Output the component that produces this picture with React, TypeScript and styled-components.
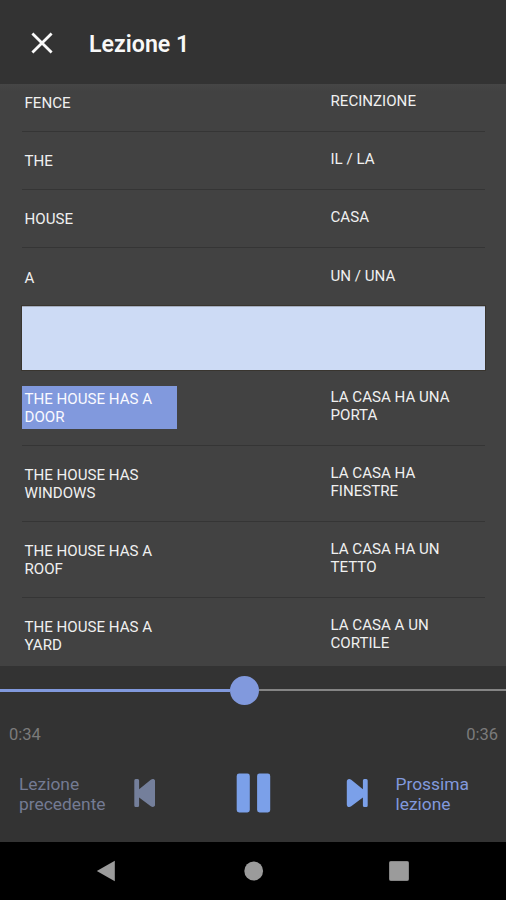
import React from "react";
import styled, { createGlobalStyle } from "styled-components";

const GlobalStyle = createGlobalStyle`
  * { box-sizing: border-box; }
  body { margin: 0; background: #000; }
`;

const Screen = styled.div`
  width: 506px;
  height: 900px;
  display: flex;
  flex-direction: column;
  overflow: hidden;
  background: #424242;
  font-family: Roboto, "Liberation Sans", sans-serif;
`;

const Header = styled.header`
  flex: 0 0 84px;
  display: flex;
  align-items: center;
  padding: 1px 0 0 31px;
  background: #333333;
`;

const CloseButton = styled.button`
  width: 22px;
  height: 22px;
  padding: 0;
  border: 0;
  background: none;
  svg { display: block; }
`;

const Title = styled.h1`
  margin: 0 0 0 36px;
  padding-top: 2px;
  font-size: 23.2px;
  line-height: 28px;
  font-weight: 600;
  color: #f8f8f8;
`;

const WordList = styled.main`
  flex: 0 0 582px;
  overflow: hidden;
  padding: 0 21px 0 22px;
  background: linear-gradient(#464646, #424242 8px);
`;

const Row = styled.div<{ $height: number; $top: number; $last?: boolean }>`
  height: ${(p) => p.$height}px;
  padding-top: ${(p) => p.$top}px;
  display: grid;
  grid-template-columns: 155px 130px;
  column-gap: 151px;
  align-items: start;
  border-bottom: ${(p) => (p.$last ? "0" : "1.5px solid #353535")};
`;

const Word = styled.div<{ $active?: boolean }>`
  margin-top: -3px;
  padding: 5px 2.5px 3px;
  font-size: 15.1px;
  line-height: 17.7px;
  color: ${(p) => (p.$active ? "#fafaff" : "#f0f0f0")};
  background: ${(p) => (p.$active ? "#8199dd" : "transparent")};
`;

const Translation = styled.div`
  padding-left: 2.5px;
  font-size: 15.1px;
  line-height: 17.7px;
  color: #f0f0f0;
`;

const Banner = styled.div`
  height: 64px;
  background: #cddbf5;
  border-top: 1px solid #a5aebf;
  outline: 1px solid #39352f;
`;

const Player = styled.section`
  flex: 0 0 176px;
  background: #333333;
`;

const Slider = styled.div`
  height: 48px;
  display: flex;
  align-items: center;
`;

const Played = styled.div`
  width: 230px;
  height: 3px;
  background: #8199dd;
`;

const Thumb = styled.div`
  width: 29px;
  height: 29px;
  border-radius: 50%;
  background: #8199dd;
`;

const Remaining = styled.div`
  flex: 1;
  height: 2px;
  background: #858585;
`;

const Times = styled.div`
  display: flex;
  justify-content: space-between;
  padding: 11px 8px 0 9px;
  font-size: 16.5px;
  line-height: 20px;
  color: #7b7b7b;
`;

const Controls = styled.div`
  height: 96px;
  display: grid;
  grid-template-columns: 114px 103px 35px 124.5px 92px;
  padding-left: 19px;
  align-items: center;
`;

const ControlLabel = styled.div<{ $dim?: boolean }>`
  padding-top: 2px;
  font-size: 17.4px;
  line-height: 20px;
  color: ${(p) => (p.$dim ? "#747b93" : "#8199dd")};
`;

const IconSlot = styled.div<{ $right?: boolean }>`
  display: flex;
  padding-left: ${(p) => (p.$right ? "75px" : "0")};
`;

const NavBar = styled.nav`
  flex: 0 0 58px;
  display: grid;
  grid-template-columns: 148px 145px 28px;
  padding-left: 96px;
  align-items: center;
  background: #000;
  svg { display: block; }
`;

const entriesBefore = [
  { word: "FENCE", translation: "RECINZIONE", height: 47.5, top: 8.5 },
  { word: "THE", translation: "IL / LA", height: 58.5, top: 19.5 },
  { word: "HOUSE", translation: "CASA", height: 58, top: 19 },
  { word: "A", translation: "UN / UNA", height: 58, top: 19.5, last: true },
];

const entriesAfter = [
  { word: "THE HOUSE HAS A DOOR", translation: "LA CASA HA UNA PORTA", height: 76, top: 18.8, active: true },
  { word: "THE HOUSE HAS WINDOWS", translation: "LA CASA HA FINESTRE", height: 76, top: 19 },
  { word: "THE HOUSE HAS A ROOF", translation: "LA CASA HA UN TETTO", height: 76, top: 19 },
  { word: "THE HOUSE HAS A YARD", translation: "LA CASA A UN CORTILE", height: 76, top: 19.2, last: true },
];

type Entry = {
  word: string;
  translation: string;
  height: number;
  top: number;
  last?: boolean;
  active?: boolean;
};

const EntryRow = ({ entry }: { entry: Entry }) => (
  <Row $height={entry.height} $top={entry.top} $last={entry.last}>
    <Word $active={entry.active}>{entry.word}</Word>
    <Translation>{entry.translation}</Translation>
  </Row>
);

const SkipIcon = ({ color, back }: { color: string; back?: boolean }) => (
  <svg width="22" height="30" viewBox="0 0 22 30">
    <g fill={color} transform={back ? "translate(22.5 0) scale(-1 1)" : "translate(.5 0)"}>
      <path d="M.3 3.6C.3 1.2 2.7.2 4.7 1.8L16.4 11.3V2.6Q16.4 1 17.8 1h2Q21.2 1 21.2 2.6v24.8Q21.2 29 19.8 29h-2Q16.4 29 16.4 27.4V19.5L4.7 28.2C2.7 29.8.3 28.8.3 26.4Z" />
    </g>
  </svg>
);

export default function App() {
  return (
    <>
      <GlobalStyle />
      <Screen>
        <Header>
          <CloseButton aria-label="Chiudi">
            <svg width="22" height="22" viewBox="0 0 22 22">
              <path d="M1.4 1.4 20.6 20.6M20.6 1.4 1.4 20.6" stroke="#fafafa" strokeWidth="2.8" />
            </svg>
          </CloseButton>
          <Title>Lezione 1</Title>
        </Header>
        <WordList>
          {entriesBefore.map((entry) => (
            <EntryRow key={entry.word} entry={entry} />
          ))}
          <Banner />
          {entriesAfter.map((entry) => (
            <EntryRow key={entry.word} entry={entry} />
          ))}
        </WordList>
        <Player>
          <Slider>
            <Played />
            <Thumb />
            <Remaining />
          </Slider>
          <Times>
            <span>0:34</span>
            <span>0:36</span>
          </Times>
          <Controls>
            <ControlLabel $dim>Lezione precedente</ControlLabel>
            <IconSlot>
              <SkipIcon color="#747f9b" back />
            </IconSlot>
            <IconSlot>
              <svg width="36" height="40" viewBox="0 0 36 40">
                <rect x="0.7" y="0" width="13.5" height="40" rx="2.5" fill="#7ba0e9" />
                <rect x="21.7" y="0" width="13.5" height="40" rx="2.5" fill="#7ba0e9" />
              </svg>
            </IconSlot>
            <IconSlot $right>
              <SkipIcon color="#7ba0e9" />
            </IconSlot>
            <ControlLabel>Prossima lezione</ControlLabel>
          </Controls>
        </Player>
        <NavBar>
          <svg width="20" height="22" viewBox="0 0 20 22">
            <path d="M.8 11 18.8.7V21.3Z" fill="#9b9b9b" />
          </svg>
          <svg width="20" height="20" viewBox="0 0 20 20">
            <circle cx="9.7" cy="10" r="9.4" fill="#9b9b9b" />
          </svg>
          <svg width="20" height="20" viewBox="0 0 20 20">
            <rect x="0.5" y="0.5" width="19" height="19" rx="1" fill="#9b9b9b" stroke="#858585" />
          </svg>
        </NavBar>
      </Screen>
    </>
  );
}
